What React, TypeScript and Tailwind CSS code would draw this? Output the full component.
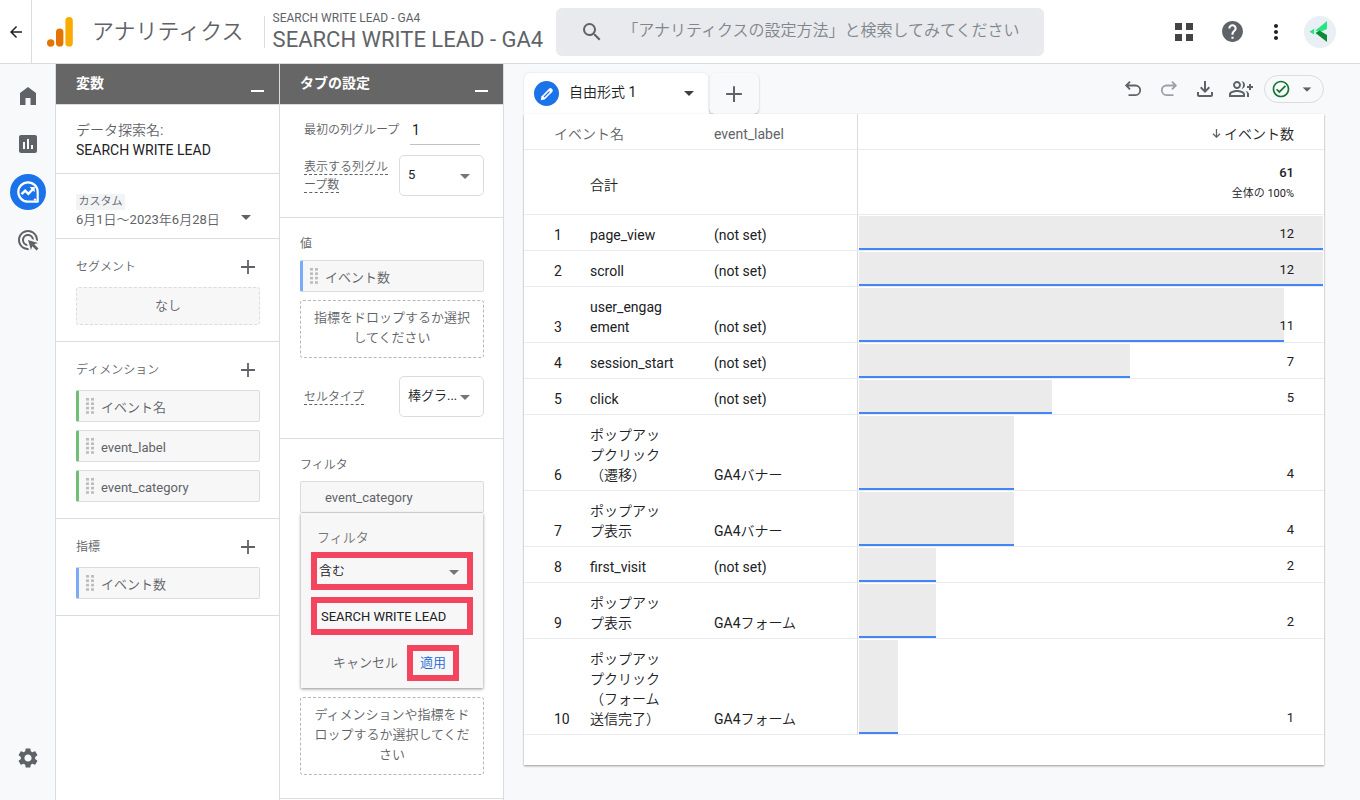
import type { ReactNode } from 'react'
import {
  MdAdsClick,
  MdArrowBack,
  MdHelp,
  MdInsertChart,
  MdMoreVert,
  MdOutlineCheckCircle,
  MdOutlineFileDownload,
  MdOutlineGroupAdd,
  MdSearch,
  MdSettings,
} from 'react-icons/md'

type Row = { name: string; label: string; count: number }

// \u200b marks the place where a long event name may wrap
const rows: Row[] = [
  { name: 'page_view', label: '(not set)', count: 12 },
  { name: 'scroll', label: '(not set)', count: 12 },
  { name: 'user_engag\u200bement', label: '(not set)', count: 11 },
  { name: 'session_start', label: '(not set)', count: 7 },
  { name: 'click', label: '(not set)', count: 5 },
  { name: 'ポップアップクリック（遷移）', label: 'GA4バナー', count: 4 },
  { name: 'ポップアップ表示', label: 'GA4バナー', count: 4 },
  { name: 'first_visit', label: '(not set)', count: 2 },
  { name: 'ポップアップ表示', label: 'GA4フォーム', count: 2 },
  { name: 'ポップアップクリック（フォーム送信完了）', label: 'GA4フォーム', count: 1 },
]

const maxCount = Math.max(...rows.map((r) => r.count))

function Caret({ className = '' }: { className?: string }) {
  return (
    <svg viewBox="0 0 10 5" className={`h-[5px] w-[10px] shrink-0 fill-current ${className}`} aria-hidden="true">
      <path d="M0 0h10L5 5z" />
    </svg>
  )
}

function PlusIcon({ className = 'size-4' }: { className?: string }) {
  return (
    <svg viewBox="0 0 16 16" className={className} fill="none" stroke="currentColor" strokeWidth="1.8" aria-hidden="true">
      <path d="M8 1v14M1 8h14" />
    </svg>
  )
}

function AnalyticsLogo() {
  return (
    <svg viewBox="0 0 26 30" className="h-[30px] w-[26px] shrink-0" aria-hidden="true">
      <rect x="18.4" y="0" width="7.4" height="29.6" rx="3.7" fill="#f9ab00" />
      <rect x="9" y="11.4" width="7.4" height="18.2" rx="3.7" fill="#e37400" />
      <circle cx="3.7" cy="26" r="3.7" fill="#e37400" />
    </svg>
  )
}

function ExploreIcon() {
  return (
    <svg viewBox="0 0 24 24" className="size-6" fill="none" stroke="currentColor" aria-hidden="true">
      <path d="M21.7 21.7H12A9.7 9.7 0 1 1 21.7 12z" strokeWidth="2.2" strokeLinejoin="round" />
      <path d="M5.5 14.2l3.7-3.6 3.2 3.2 5-5.2" strokeWidth="2.4" />
      <path d="M13.5 7h5.2v5.2z" fill="currentColor" stroke="none" />
      <circle cx="19" cy="19.6" r="1.2" fill="currentColor" stroke="none" />
    </svg>
  )
}

function UndoIcon() {
  return (
    <svg viewBox="0 0 24 24" className="size-6" fill="none" stroke="currentColor" strokeWidth="1.8" aria-hidden="true">
      <path d="M9 4.6L5.2 8.5L9 12.4M5.4 8.5h9a4.8 4.8 0 0 1 0 9.6H7.5" />
    </svg>
  )
}

function DragDots() {
  return (
    <svg viewBox="0 0 8 16" className="h-4 w-2 shrink-0 fill-[#bdbdbd]" aria-hidden="true">
      {[0, 4.4, 8.8, 13.2].map((y) => (
        <g key={y}>
          <rect x="0" y={y} width="3" height="2.6" />
          <rect x="5" y={y} width="3" height="2.6" />
        </g>
      ))}
    </svg>
  )
}

const chipAccent = {
  green: 'border-l-[3px] border-l-[#71bf76] pl-[7px]',
  blue: 'border-l-[3px] border-l-[#7baaf7] pl-[7px]',
}

function Chip({ children, accent }: { children: ReactNode; accent: 'green' | 'blue' }) {
  return (
    <button
      type="button"
      className={`flex h-8 w-full items-center gap-[7px] rounded-xs border border-[#dadce0] bg-[#f7f7f7] text-[13px] text-[#5f6368] ${chipAccent[accent]}`}
    >
      <DragDots />
      <span className="pt-[3px]">{children}</span>
    </button>
  )
}

function PanelHeader({ title }: { title: string }) {
  return (
    <header className="flex h-[41px] items-center justify-between border-b border-[#dadce0] bg-[#666] pr-[15px] pl-5 text-white">
      <h2 className="pb-1 font-['Noto_Sans_CJK_JP',sans-serif] text-sm font-bold">{title}</h2>
      <button type="button" aria-label="最小化" className="flex h-5 w-[13px] items-end pb-[2px]">
        <span className="h-[2px] w-full bg-white" />
      </button>
    </header>
  )
}

function VariableSection({ title, children }: { title: string; children: ReactNode }) {
  return (
    <section className="border-b border-[#dadce0] pt-4 pr-[19px] pb-4 pl-5">
      <div className="mb-2 flex h-6 items-center justify-between pr-1">
        <h3 className="text-xs text-[#5f6368]">{title}</h3>
        <button type="button" aria-label={`${title}を追加`} className="text-[#5f6368]">
          <PlusIcon />
        </button>
      </div>
      <div className="flex flex-col gap-2">{children}</div>
    </section>
  )
}

function SettingSelect({ id, value }: { id: string; value: string }) {
  return (
    <div className="relative w-[85px] shrink-0">
      <select
        id={id}
        defaultValue={value}
        className="h-[41px] w-full appearance-none rounded-[5px] border border-[#dadce0] bg-white pb-[2px] pl-2 text-[13px] text-[#202124]"
      >
        <option>{value}</option>
      </select>
      <Caret className="pointer-events-none absolute top-[19px] right-[14px] text-[#757575]" />
    </div>
  )
}

function DropZone({ children }: { children: ReactNode }) {
  return (
    <div className="rounded-[3px] border border-dashed border-[#b7b7b7] px-3 pt-[7px] pb-[9px] text-center text-[13px] leading-5 text-[#5f6368]">
      {children}
    </div>
  )
}

function TopBar() {
  return (
    <header className="flex h-16 shrink-0 items-center border-b border-[#dadce0] bg-white">
      <button
        type="button"
        aria-label="戻る"
        className="flex h-full w-8 shrink-0 items-center justify-center border-r border-[#dadce0] text-[#202124]"
      >
        <MdArrowBack className="size-[18px]" />
      </button>
      <a href="#" className="flex shrink-0 items-center gap-[19px] pl-[15px] text-[#5f6368]">
        <AnalyticsLogo />
        <span className="text-[22px]">アナリティクス</span>
      </a>
      <div className="ml-5 h-8 shrink-0 border-l border-[#dadce0]" />
      <div className="shrink-0 pl-2 text-[#5f6368]">
        <div className="text-xs">SEARCH WRITE LEAD - GA4</div>
        <div className="text-[22px] leading-7">SEARCH WRITE LEAD - GA4</div>
      </div>
      <div className="ml-[13px] flex h-12 max-w-[488px] flex-1 items-center gap-[18px] rounded-md bg-[#e8eaed] pl-6">
        <MdSearch className="size-6 shrink-0 text-[#5f6368]" />
        <input
          type="search"
          aria-label="検索"
          placeholder="「アナリティクスの設定方法」と検索してみてください"
          className="min-w-0 flex-1 bg-transparent pb-[2px] text-base outline-none placeholder:text-[#80868b]"
        />
      </div>
      <div className="ml-auto flex shrink-0 items-center pr-6 pl-4">
        <button type="button" aria-label="アプリ" className="mr-[27px]">
          <svg viewBox="0 0 18 18" className="size-[18px] fill-[#444]">
            <path d="M0 0h7v7H0zM11 0h7v7h-7zM0 11h7v7H0zM11 11h7v7h-7z" />
          </svg>
        </button>
        <button type="button" aria-label="ヘルプ" className="mr-[19px] text-[#5f6368]">
          <MdHelp className="size-[25px]" />
        </button>
        <button type="button" aria-label="その他" className="mr-4 text-[#202124]">
          <MdMoreVert className="size-6" />
        </button>
        <button type="button" aria-label="アカウント" className="size-8 rounded-full bg-[#e9eff4]">
          <svg viewBox="0 0 32 32" className="size-8">
            <path d="M23 5v8l-7 3-4.500-1.500z" fill="#27e680" />
            <path d="M11.500 17l4-2.500L23 19v7z" fill="#0c8a3a" />
            <path d="M5.500 15.700l4.500-2.900v5.700z" fill="#27e680" />
            <path d="M10.600 12.600h1.400v6h-1.400z" fill="#b9f5d3" />
          </svg>
        </button>
      </div>
    </header>
  )
}

function SideNav() {
  const item = 'flex size-9 items-center justify-center rounded-full'
  return (
    <nav className="flex w-14 shrink-0 flex-col items-center gap-3 border-r border-[#dadce0] pt-[14px] pb-6 text-[#5f6368]">
      <a href="#" aria-label="ホーム" className={item}>
        <svg viewBox="0 0 24 24" className="size-6 fill-current">
          <path d="M4 21V9l8-6 8 6v12h-5.500v-7h-5v7z" />
        </svg>
      </a>
      <a href="#" aria-label="レポート" className={item}>
        <MdInsertChart className="size-6" />
      </a>
      <a href="#" aria-label="探索" className={`${item} bg-[#1a73e8] text-white`}>
        <ExploreIcon />
      </a>
      <a href="#" aria-label="広告" className={item}>
        <MdAdsClick className="size-6" />
      </a>
      <a href="#" aria-label="管理" className={`${item} mt-auto`}>
        <MdSettings className="size-6" />
      </a>
    </nav>
  )
}

function VariablesPanel() {
  return (
    <aside className="w-56 shrink-0 border-r border-[#dadce0] bg-white">
      <PanelHeader title="変数" />
      <section className="border-b border-[#dadce0] px-5 pt-[15px] pb-[13px] text-sm leading-5">
        <label htmlFor="exploration-name" className="block text-[#5f6368]">
          データ探索名:
        </label>
        <input
          id="exploration-name"
          defaultValue="SEARCH WRITE LEAD"
          className="block h-5 w-full text-[#202124] outline-none"
        />
      </section>
      <section className="border-b border-[#dadce0] px-5 pt-5 pb-[9px] text-[#5f6368]">
        <button type="button" className="flex w-full items-end justify-between pr-2 text-left">
          <span>
            <span className="block h-4 w-[49px] bg-[#f1f3f4] text-center text-[11px] leading-4">カスタム</span>
            <span className="block pt-px text-[13px] leading-[18px]">6月1日～2023年6月28日</span>
          </span>
          <Caret className="mb-[9px]" />
        </button>
      </section>
      <VariableSection title="セグメント">
        <button
          type="button"
          className="h-[38px] rounded-[3px] border border-dashed border-[#dadce0] bg-[#f7f7f7] text-[13px] text-[#5f6368]"
        >
          なし
        </button>
      </VariableSection>
      <VariableSection title="ディメンション">
        <Chip accent="green">イベント名</Chip>
        <Chip accent="green">event_label</Chip>
        <Chip accent="green">event_category</Chip>
      </VariableSection>
      <VariableSection title="指標">
        <Chip accent="blue">イベント数</Chip>
      </VariableSection>
    </aside>
  )
}

function FilterEditor() {
  return (
    <form
      className="mx-px bg-[#f7f7f7] px-[10px] pt-[15px] pb-[7px] text-[13px] shadow-[0_1px_3px_rgba(0,0,0,0.45)]"
      onSubmit={(e) => e.preventDefault()}
    >
      <label htmlFor="filter-match" className="mb-1 block pl-[6px] leading-5 text-[#757575]">
        フィルタ
      </label>
      <div className="relative">
        <select
          id="filter-match"
          defaultValue="含む"
          className="h-[38px] w-full appearance-none border-[6px] border-[#f4455f] pl-[2px] text-[#202124]"
        >
          <option>含む</option>
        </select>
        <Caret className="pointer-events-none absolute top-[18px] right-[14px] text-[#757575]" />
      </div>
      <input
        aria-label="フィルタの値"
        defaultValue="SEARCH WRITE LEAD"
        className="mt-[7px] h-[38px] w-full border-[6px] border-[#f4455f] pl-1 text-[#202124] outline-none"
      />
      <div className="mt-[10px] flex items-center justify-end gap-[9px] pr-[14px]">
        <button type="button" className="text-[#5f6368]">
          キャンセル
        </button>
        <button
          type="submit"
          className="h-9 w-[52px] border-[6px] border-[#f4455f] text-[#1967d2]"
        >
          適用
        </button>
      </div>
    </form>
  )
}

function SettingsPanel() {
  return (
    <aside className="w-56 shrink-0 border-r border-[#dadce0] bg-white">
      <PanelHeader title="タブの設定" />
      <section className="border-b border-[#dadce0] pt-[11px] pr-[19px] pb-[21px] pl-6 text-xs text-[#5f6368]">
        <div className="flex items-center justify-between pr-1">
          <label htmlFor="first-column" className="pb-[2px]">
            最初の列グループ
          </label>
          <input
            id="first-column"
            defaultValue="1"
            className="h-[29px] w-[70px] border-b border-[#bdc1c6] pl-[2px] text-sm text-[#202124] outline-none"
          />
        </div>
        <div className="mt-[10px] flex items-center justify-between">
          <label htmlFor="column-count" className="w-[85px] leading-[18px]">
            <span className="border-b border-dashed border-[#5f6368]">表示する列グループ数</span>
          </label>
          <SettingSelect id="column-count" value="5" />
        </div>
      </section>
      <section className="border-b border-[#dadce0] pt-4 pr-[19px] pb-[21px] pl-5 text-xs text-[#5f6368]">
        <h3 className="mb-[6px] leading-5">値</h3>
        <div className="flex flex-col gap-2">
          <Chip accent="blue">イベント数</Chip>
          <DropZone>指標をドロップするか選択してください</DropZone>
        </div>
        <div className="mt-[18px] flex items-center justify-between pl-1">
          <label htmlFor="cell-type">
            <span className="border-b border-dashed border-[#5f6368]">セルタイプ</span>
          </label>
          <SettingSelect id="cell-type" value="棒グラ..." />
        </div>
      </section>
      <section className="border-b border-[#dadce0] pt-4 pr-[19px] pb-[23px] pl-5 text-xs text-[#5f6368]">
        <h3 className="mb-[6px] leading-5">フィルタ</h3>
        <button
          type="button"
          className="block h-8 w-full rounded-xs border border-[#dadce0] bg-[#f7f7f7] pt-[2px] pl-6 text-left text-[13px]"
        >
          event_category
        </button>
        <FilterEditor />
        <div className="mt-[9px]">
          <DropZone>ディメンションや指標をドロップするか選択してください</DropZone>
        </div>
      </section>
    </aside>
  )
}

function Toolbar() {
  return (
    <div className="flex h-8 items-center gap-3 text-[#5f6368]">
      <button type="button" aria-label="元に戻す">
        <UndoIcon />
      </button>
      <button type="button" aria-label="やり直す" className="-scale-x-100 text-[#9aa0a6]">
        <UndoIcon />
      </button>
      <button type="button" aria-label="ダウンロード">
        <MdOutlineFileDownload className="size-6" />
      </button>
      <button type="button" aria-label="共有">
        <MdOutlineGroupAdd className="size-6" />
      </button>
      <button
        type="button"
        aria-label="データの品質"
        className="-ml-px flex h-7 w-[60px] items-center justify-between rounded-full border border-[#dadce0] pr-[11px] pl-[6px]"
      >
        <MdOutlineCheckCircle className="size-5 text-[#137333]" />
        <Caret className="scale-90" />
      </button>
    </div>
  )
}

function ReportTable() {
  const cell = 'border-b border-[#e8eaed] pt-[10px] pb-[5px] align-bottom'
  return (
    <table className="w-full table-fixed border-separate border-spacing-0 text-sm leading-5 text-[#202124]">
      <colgroup>
        <col className="w-[66px]" />
        <col className="w-[124px]" />
        <col className="w-36" />
        <col />
      </colgroup>
      <thead>
        <tr className="text-left text-[#5f6368]">
          <th colSpan={2} className={`${cell} pl-[30px] font-normal`}>
            イベント名
          </th>
          <th className={`${cell} border-r border-r-[#dadce0] font-normal`}>event_label</th>
          <th className={`${cell} pr-[30px] font-normal text-[#202124]`}>
            <span className="flex h-5 items-center justify-end gap-[3px]">
              <svg
                viewBox="0 0 9 9"
                className="mb-[2px] size-[9px] text-[#5f6368]"
                fill="none"
                stroke="currentColor"
                strokeWidth="1.3"
              >
                <path d="M4.500 0v8.200M1 4.700l3.500 3.500L8 4.700" />
              </svg>
              イベント数
            </span>
          </th>
        </tr>
      </thead>
      <tbody>
        <tr>
          <td className="border-b border-[#e8eaed]" />
          <td className="border-b border-[#e8eaed] pt-[6px]">合計</td>
          <td className="border-r border-b border-[#e8eaed] border-r-[#dadce0]" />
          <td className="border-b border-[#e8eaed] pt-[13px] pr-[30px] pb-[9px] text-right">
            <div className="text-[13px] font-medium">61</div>
            <div className="text-[11px] leading-[22px]">全体の 100%</div>
          </td>
        </tr>
        {rows.map((row, i) => (
          <tr key={i}>
            <td className={`${cell} pl-[30px]`}>{i + 1}</td>
            <td className={`${cell} pr-11`}>{row.name}</td>
            <td className={`${cell} border-r border-r-[#dadce0]`}>{row.label}</td>
            <td className="relative border-b border-[#e8eaed] pr-[30px] pb-[6px] text-right align-bottom text-[13px]">
              <div className="absolute inset-y-0 right-px left-px pt-px">
                <div
                  className="h-full border-b-2 border-[#4285f4] bg-[#ebebeb]"
                  style={{ width: `${(row.count / maxCount) * 100}%` }}
                />
              </div>
              <span className="relative">{row.count}</span>
            </td>
          </tr>
        ))}
      </tbody>
    </table>
  )
}

function Report() {
  return (
    <main className="min-w-0 flex-1 pt-[9px] pr-9 pb-8 pl-5">
      <div className="flex items-start justify-between">
        <div className="flex h-[41px]">
          <div className="flex w-[185px] items-center rounded-t-md bg-white pr-[15px] pl-[10px] shadow-[0_0_2px_rgba(0,0,0,0.15)]">
            <span className="flex size-[25px] items-center justify-center rounded-full bg-[#1a73e8]">
              <svg viewBox="0 0 14 14" className="size-[14px]">
                <path d="M.8 13.200l.6-3.800L9 1.800a2 2 0 0 1 2.800 0l.4.4a2 2 0 0 1 0 2.800l-7.600 7.600z" fill="#fff" />
                <path d="M4 10l5.500-5.500" stroke="#1a73e8" strokeWidth="1.1" />
              </svg>
            </span>
            <button type="button" className="flex flex-1 items-center justify-between pl-[10px] text-sm text-[#202124]">
              <span className="pb-[3px]">自由形式 1</span>
              <Caret className="text-[#3c4043]" />
            </button>
          </div>
          <button
            type="button"
            aria-label="タブを追加"
            className="flex w-[50px] items-center justify-center rounded-md text-[#5f6368] shadow-[0_1px_2px_rgba(0,0,0,0.25)]"
          >
            <PlusIcon className="size-[18px]" />
          </button>
        </div>
        <Toolbar />
      </div>
      <div className="relative bg-white pb-[30px] shadow-[0_1px_2px_rgba(0,0,0,0.4)]">
        <ReportTable />
      </div>
    </main>
  )
}

export default function App() {
  return (
    <div className="flex min-h-screen flex-col bg-[#f8f9fb] font-['Roboto','Noto_Sans_CJK_JP_DemiLight','Noto_Sans_CJK_JP_Light','Noto_Sans_CJK_JP',sans-serif]">
      <TopBar />
      <div className="flex flex-1">
        <SideNav />
        <VariablesPanel />
        <SettingsPanel />
        <Report />
      </div>
    </div>
  )
}
